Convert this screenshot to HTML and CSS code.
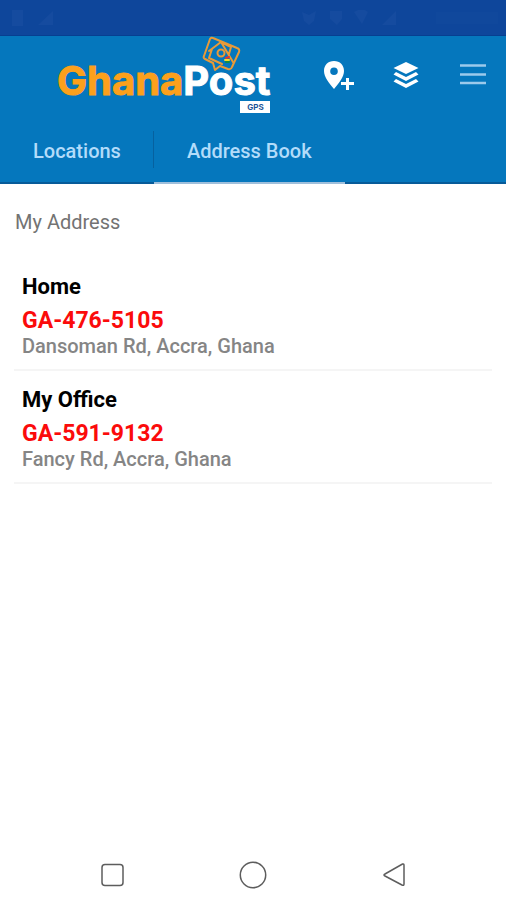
FILE: index.html
```html
<!DOCTYPE html>
<html lang="en">
<head>
<meta charset="utf-8">
<meta name="viewport" content="width=device-width, initial-scale=1">
<title>GhanaPost GPS</title>
<link rel="stylesheet" href="styles.css">
</head>
<body>
<div class="status">
  <svg class="status-icons" width="44" height="16" viewBox="0 0 44 16" aria-hidden="true"><path d="M0 0h11v16H0zM26 15L41 1v14z"/></svg>
  <svg class="status-icons" width="196" height="16" viewBox="0 0 196 16" aria-hidden="true"><path d="M0 2l7 3 7-4-2 10-5 4-5-4zM28 1h12v8l-5 6-7-6zM52 2q8-5 14 0l-6 12zM80 15L94 1v14z"/><path class="faint" d="M134 2h62v12h-62z"/></svg>
</div>
<header class="header">
  <div class="toolbar">
    <h1 class="logo">
      <span class="word"><span class="ghana">Ghana</span><span class="post">Post</span></span>
      <span class="gps">GPS</span>
      <svg class="stamp" width="42" height="38" viewBox="0 0 42 38" fill="none" stroke="#e99a38" stroke-width="2" stroke-linejoin="round" stroke-linecap="round" aria-hidden="true">
        <path d="M10 3q1-2 3-1l24 10q3 1 2 4l-7 15q-1 3-4 2l-8-3-5 4-2-7-8-4q-2-1-1-3z"/>
        <path d="M9 15L21 6l12 20M12 13L9 22l13 6M21 6l10 5-2 7"/>
        <circle cx="21" cy="17" r="3.500"/>
        <path stroke="#e7312d" d="M26 22l3-1"/><path stroke="#f5dc28" d="M25 24h4"/><path stroke="#168a43" d="M26 26h3"/>
      </svg>
    </h1>
    <div class="actions">
      <button class="icon" type="button" aria-label="Add location">
        <svg width="32" height="32" viewBox="0 0 32 32" fill="#fff"><path fill-rule="evenodd" d="M11 2C5 2 1 6 1 12c0 6 5 12 10 18 5-6 10-12 10-18 0-6-4-10-10-10zm0 6.500a3.800 3.800 0 1 1 0 7.600 3.800 3.800 0 0 1 0-7.600z"/><path d="M23 19h3v4h5v3h-5v5h-3v-5h-5v-3h5z"/></svg>
      </button>
      <button class="icon" type="button" aria-label="Map layers">
        <svg width="32" height="32" viewBox="0 0 32 32" fill="#fff"><path d="M16 3l12.500 6L16 15 3.500 9zM6 13l10 5 10-5 2.500 2.500L16 22 3.500 15.500zM6 20l10 5 10-5 2.500 2.500L16 29 3.500 22.500z"/></svg>
      </button>
      <button class="icon" type="button" aria-label="Menu">
        <svg width="32" height="32" viewBox="0 0 32 32" stroke="#9ccaec" stroke-width="2.500"><path d="M3 6.500h26M3 15.500h26M3 24h26"/></svg>
      </button>
    </div>
  </div>
  <nav class="tabs" aria-label="Sections">
    <a class="tab" href="#locations">Locations</a>
    <a class="tab active" href="#addresses" aria-current="page">Address Book</a>
  </nav>
</header>
<main class="main" id="addresses">
  <h2 class="heading">My Address</h2>
  <ul class="list">
    <li class="entry">
      <h3 class="name">Home</h3>
      <p class="code">GA-476-5105</p>
      <p class="place">Dansoman Rd, Accra, Ghana</p>
    </li>
    <li class="entry">
      <h3 class="name">My Office</h3>
      <p class="code">GA-591-9132</p>
      <p class="place">Fancy Rd, Accra, Ghana</p>
    </li>
  </ul>
</main>
<footer class="navbar">
  <button class="icon" type="button" aria-label="Recent apps"><svg width="32" height="32" viewBox="0 0 32 32"><rect x="6" y="5.500" width="21" height="21" rx="3"/></svg></button>
  <button class="icon" type="button" aria-label="Home"><svg width="32" height="32" viewBox="0 0 32 32"><circle cx="16" cy="16" r="12.700"/></svg></button>
  <button class="icon" type="button" aria-label="Back"><svg width="32" height="32" viewBox="0 0 32 32"><path d="M24.500 5Q26 4.500 26 6.500V25q0 2-2 1L7 17q-2-1 0-2z"/></svg></button>
</footer>
</body>
</html>
```
FILE: styles.css
```css
* {
  box-sizing: border-box;
}

body {
  margin: 0;
  min-height: 100vh;
  display: flex;
  flex-direction: column;
  background: #fff;
  font-family: Roboto, "Liberation Sans", sans-serif;
}

h1, h2, h3, p, ul {
  margin: 0;
  padding: 0;
}

.status {
  height: 36px;
  padding: 0 8px 0 12px;
  display: flex;
  align-items: center;
  justify-content: space-between;
  background: #0e469b;
  border-bottom: 1px solid #073f91;
}

.status-icons {
  fill: #154b9f;
}

.faint {
  fill: #10489c;
}

.header {
  background: #0577bd;
}

.toolbar {
  height: 86px;
  padding: 0 17px 0 57px;
  display: flex;
  align-items: flex-start;
  justify-content: space-between;
}

.logo {
  position: relative;
  padding-top: 24px;
  display: flex;
  flex-direction: column;
  font-family: Inter, "Liberation Sans", sans-serif;
}

.word {
  font-size: 40px;
  line-height: 41px;
  font-weight: 700;
  -webkit-text-stroke: 1px currentColor;
}

.ghana {
  color: #fca01c;
}

.post {
  color: #fff;
}

.gps {
  align-self: flex-end;
  width: 30px;
  background: #fff;
  color: #1d5598;
  font-size: 8px;
  line-height: 12px;
  text-align: center;
}

.stamp {
  position: absolute;
  top: 0;
  right: 28px;
}

.actions {
  display: flex;
  gap: 35px;
  padding-top: 23px;
}

.icon {
  padding: 0;
  border: 0;
  background: none;
  display: flex;
}

.tabs {
  display: flex;
  height: 62px;
  border-bottom: 2px solid #075b99;
}

.tab {
  position: relative;
  height: 62px;
  padding: 0 33px;
  color: #b3dcfa;
  font-size: 20px;
  line-height: 58px;
  font-weight: 500;
  text-decoration: none;
}

.tab:first-child::after {
  content: "";
  position: absolute;
  top: 9px;
  right: 0;
  width: 1px;
  height: 37px;
  background: #06619f;
}

.active {
  border-bottom: 2px solid #9fbfdb;
}

.main {
  flex: 1;
  padding: 22px 14px;
}

.heading {
  padding-left: 1px;
  color: #737373;
  font-size: 20px;
  line-height: 32px;
  font-weight: 400;
}

.list {
  padding-top: 20px;
  list-style: none;
}

.entry {
  padding: 12px 8px 14px;
  border-bottom: 2px solid #f5f5f5;
}

.name {
  color: #000;
  font-size: 22px;
  line-height: 34px;
  font-weight: 700;
}

.code {
  color: #fb0b0b;
  font-size: 23px;
  line-height: 33px;
  font-weight: 700;
}

.place {
  color: #858585;
  font-size: 20px;
  line-height: 18px;
  font-weight: 500;
}

.navbar {
  height: 50px;
  padding: 0 42px;
  display: grid;
  grid-template-columns: repeat(3, 1fr);
  place-items: center;
}

.navbar svg {
  fill: none;
  stroke: #5d5d5d;
  stroke-width: 1.5;
}
```
